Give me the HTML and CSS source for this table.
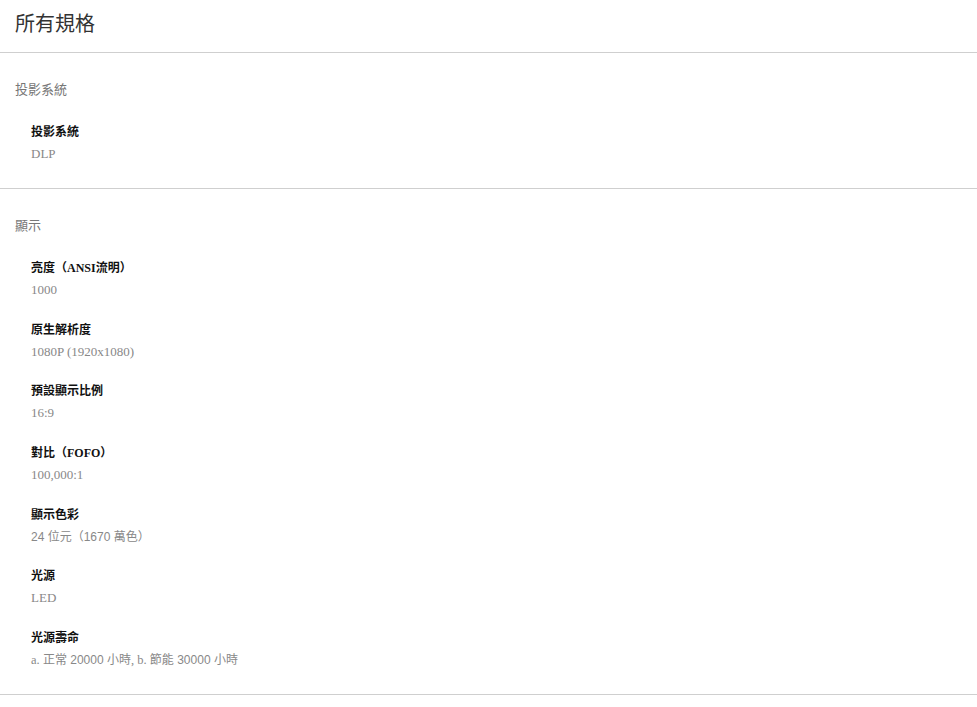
FILE: index.html
```html
<!DOCTYPE html>
<html lang="zh-Hant">
<head>
<meta charset="utf-8">
<title>所有規格</title>
<link rel="stylesheet" href="styles.css">
</head>
<body>
<div class="specs">
  <h1 class="specs-title">所有規格</h1>
  <section class="group">
    <h2 class="group-title">投影系統</h2>
    <dl class="items">
      <div class="item"><dt>投影系統</dt><dd>DLP</dd></div>
    </dl>
  </section>
  <section class="group">
    <h2 class="group-title">顯示</h2>
    <dl class="items">
      <div class="item"><dt>亮度（ANSI流明）</dt><dd>1000</dd></div>
      <div class="item"><dt>原生解析度</dt><dd>1080P (1920x1080)</dd></div>
      <div class="item"><dt>預設顯示比例</dt><dd>16:9</dd></div>
      <div class="item"><dt>對比（FOFO）</dt><dd>100,000:1</dd></div>
      <div class="item"><dt>顯示色彩</dt><dd><span class="sans">24 位元（1670 萬色）</span></dd></div>
      <div class="item"><dt>光源</dt><dd>LED</dd></div>
      <div class="item"><dt>光源壽命</dt><dd><span class="small">a.</span> <span class="sans">正常 20000 小時</span><span class="small">, b.</span> <span class="sans">節能 30000 小時</span></dd></div>
    </dl>
  </section>
</div>
</body>
</html>
```
FILE: styles.css
```css
* { box-sizing: border-box; }
html, body { margin: 0; padding: 0; background: #fff; }
body {
  font-family: "Liberation Serif", "Noto Sans CJK TC", serif;
  color: #333;
}
.specs { width: 100%; }
.specs-title {
  margin: 0;
  padding: 8px 15px 14px;
  font-family: "Noto Sans CJK TC", sans-serif;
  font-weight: 400;
  font-size: 20px;
  line-height: 30px;
  color: #333;
  border-bottom: 1px solid #cfcfcf;
}
.group {
  padding: 25.5px 15px 23px;
  border-bottom: 1px solid #cfcfcf;
}
.group-title {
  margin: 0 0 23.5px;
  font-family: "Noto Sans CJK TC", sans-serif;
  font-size: 13px;
  font-weight: 400;
  line-height: 20px;
  color: #777;
}
.items {
  margin: 0;
  padding: 0 0 0 16px;
  display: flex;
  flex-direction: column;
  gap: 18.67px;
}
.item dt {
  font-size: 12px;
  line-height: 21px;
  font-weight: 700;
  color: #111;
}
.item dd {
  margin: 0;
  font-size: 13px;
  line-height: 22px;
  color: #888;
}
.item dd .small { font-size: 12.5px; }
.sans { font-family: "Liberation Sans", "Noto Sans CJK TC", sans-serif; font-size: 12px; }
```
